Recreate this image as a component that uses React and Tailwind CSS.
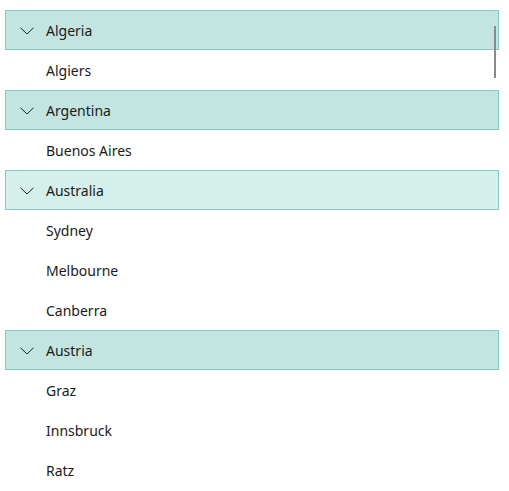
const groups = [
  { name: 'Algeria', cities: ['Algiers'] },
  { name: 'Argentina', cities: ['Buenos Aires'] },
  { name: 'Australia', cities: ['Sydney', 'Melbourne', 'Canberra'], hover: true },
  { name: 'Austria', cities: ['Graz', 'Innsbruck', 'Ratz'] },
]

const Chevron = () => (
  <svg width="14" height="8" viewBox="0 0 14 8" className="shrink-0">
    <path d="M0.5 0.8 L7 7 L13.5 0.8" fill="none" stroke="#222" strokeWidth="1" />
  </svg>
)

export default function App() {
  return (
    <div
      className="relative w-[509px] h-[491px] bg-white overflow-hidden pt-[10px] pl-[5px] pr-[10px] text-[14px] text-[#1a1a1a]"
      style={{ fontFamily: '"Segoe UI", "Noto Sans", "Open Sans", sans-serif' }}
    >
      {groups.map((g) => (
        <div key={g.name}>
          <div
            className={
              'flex items-center h-[40px] border border-[#7fcdc3] pl-[14px] gap-[12px] pt-[1px] ' +
              (g.hover ? 'bg-[#d5efeb]' : 'bg-[#c3e5e1]')
            }
          >
            <Chevron />
            <span>{g.name}</span>
          </div>
          {g.cities.map((c) => (
            <div key={c} className="flex items-center h-[40px] pl-[41px] pt-[1px]">
              {c}
            </div>
          ))}
        </div>
      ))}
      <div className="absolute left-[494px] top-[26px] w-[2px] h-[52px] bg-[#8a8a8a]" />
    </div>
  )
}
